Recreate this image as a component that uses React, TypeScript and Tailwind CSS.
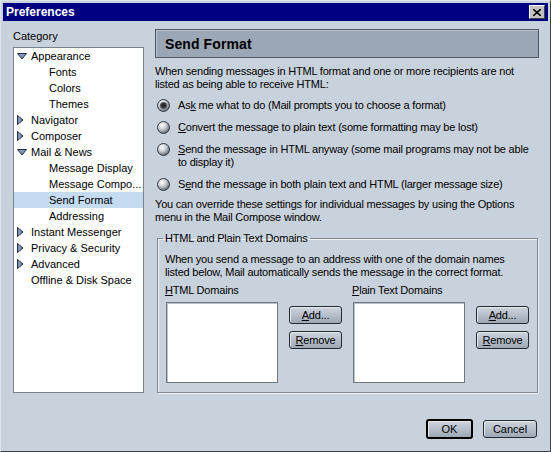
import React from "react";

type Node = {
  label: string;
  level: 0 | 1;
  arrow?: "down" | "right";
  selected?: boolean;
};

const categories: Node[] = [
  { label: "Appearance", level: 0, arrow: "down" },
  { label: "Fonts", level: 1 },
  { label: "Colors", level: 1 },
  { label: "Themes", level: 1 },
  { label: "Navigator", level: 0, arrow: "right" },
  { label: "Composer", level: 0, arrow: "right" },
  { label: "Mail & News", level: 0, arrow: "down" },
  { label: "Message Display", level: 1 },
  { label: "Message Compo...", level: 1 },
  { label: "Send Format", level: 1, selected: true },
  { label: "Addressing", level: 1 },
  { label: "Instant Messenger", level: 0, arrow: "right" },
  { label: "Privacy & Security", level: 0, arrow: "right" },
  { label: "Advanced", level: 0, arrow: "right" },
  { label: "Offline & Disk Space", level: 0 },
];

const Twisty = ({ dir }: { dir: "down" | "right" }) =>
  dir === "down" ? (
    <svg width="10" height="7" viewBox="0 0 10 7">
      <polygon points="0.5,0.5 9.5,0.5 5,6" fill="#7f97b8" stroke="#243040" strokeWidth="1" />
    </svg>
  ) : (
    <svg width="7" height="10" viewBox="0 0 7 10">
      <polygon points="0.5,0.5 6,5 0.5,9.5" fill="#7f97b8" stroke="#243040" strokeWidth="1" />
    </svg>
  );

const Radio = ({ checked, id }: { checked?: boolean; id: string }) => (
  <svg width="13" height="13" viewBox="0 0 13 13" className="shrink-0">
    <defs>
      <radialGradient id={id} cx="38%" cy="32%" r="70%">
        <stop offset="0" stopColor="#ffffff" />
        <stop offset="0.45" stopColor="#cdd2d8" />
        <stop offset="1" stopColor="#5e666f" />
      </radialGradient>
    </defs>
    <circle cx="6.5" cy="6.5" r="6" fill={`url(#${id})`} stroke="#363c44" strokeWidth="1" />
    {checked && (
      <>
        <circle cx="6.5" cy="6.5" r="3.6" fill="#5a6068" />
        <circle cx="6.5" cy="6.5" r="2.4" fill="#25292e" />
      </>
    )}
  </svg>
);

const Button = ({
  children,
  className = "",
}: {
  children: React.ReactNode;
  className?: string;
}) => (
  <button
    className={`flex items-center justify-center rounded-[3px] border border-[#222a32] bg-gradient-to-b from-[#cdd5de] to-[#9ea9b6] text-[11px] leading-[13px] text-black shadow-[inset_1px_1px_0_#e4e9ee] ${className}`}
  >
    {children}
  </button>
);

const DomainColumn = ({ label, mnemonic }: { label: string; mnemonic: string }) => (
  <div className="flex flex-col">
    <div className="leading-[13px] -ml-[1px]">
      <span className="underline">{mnemonic}</span>
      {label}
    </div>
    <div className="mt-[5px] flex gap-[11px]">
      <div className="w-[112px] h-[81px] bg-white border border-[#6e7883] shadow-[inset_1px_1px_0_#b9c1ca]" />
      <div className="flex flex-col gap-[7px] pt-[4px]">
        <Button className="w-[53px] h-[18px]">
          <span className="underline">A</span>dd...
        </Button>
        <Button className="w-[53px] h-[18px]">
          <span className="underline">R</span>emove
        </Button>
      </div>
    </div>
  </div>
);

export default function App() {
  return (
    <div className="w-[551px] h-[452px] flex flex-col p-[2px] bg-[#c8d2dc] border border-t-[#dde3e9] border-l-[#dde3e9] border-r-[#3b4249] border-b-[#3b4249] font-['Liberation_Sans',Arial,sans-serif] text-[11px] text-black overflow-hidden">
      {/* Title bar */}
      <div className="h-[18px] shrink-0 bg-[#000080] flex items-center justify-between pl-[3px] pr-[3px]">
        <span className="text-white font-bold text-[12px] leading-[14px]">Preferences</span>
        <div className="w-[16px] h-[14px] bg-[#c0c0c0] border border-t-white border-l-white border-r-[#404040] border-b-[#404040] flex items-center justify-center">
          <svg width="8" height="7" viewBox="0 0 8 7">
            <path d="M0 0 L8 7 M8 0 L0 7" stroke="#000" strokeWidth="1.6" />
          </svg>
        </div>
      </div>

      {/* Body */}
      <div className="flex flex-col flex-1 pt-[8px] pl-[10px] pr-[9px]">
        <div className="flex gap-[11px] h-[364px] shrink-0">
          {/* Category tree */}
          <div className="w-[131px] flex flex-col">
            <div className="mt-[1px] leading-[13px]">Category</div>
            <div className="mt-[4px] h-[346px] shrink-0 bg-white border border-[#7a848f]">
              {categories.map((c) => (
                <div
                  key={c.label}
                  className={`h-[16px] flex items-center whitespace-nowrap ${
                    c.level === 0 ? "pl-[3px]" : "pl-[35px]"
                  } ${c.selected ? "bg-[#c4dbf2]" : ""}`}
                >
                  {c.level === 0 && (
                    <span className="w-[14px] flex items-center">
                      {c.arrow && <Twisty dir={c.arrow} />}
                    </span>
                  )}
                  <span className="leading-[13px]">{c.label}</span>
                </div>
              ))}
            </div>
          </div>

          {/* Panel */}
          <div className="flex-1 flex flex-col tracking-[-0.2px] whitespace-nowrap">
            <div className="h-[29px] shrink-0 bg-[#9ba7b4] border border-[#4f5965] shadow-[inset_1px_1px_0_#b7c0ca] flex items-center pl-[9px]">
              <span className="font-bold text-[14px] leading-[16px] tracking-[0.1px]">Send Format</span>
            </div>

            <p className="mt-[7px] leading-[13px] shrink-0">
              When sending messages in HTML format and one or more recipients are not
              <br />
              listed as being able to receive HTML:
            </p>

            <div className="mt-[8px] flex flex-col gap-[9px] pl-[2px] shrink-0">
              <div className="flex items-start gap-[8px]">
                <Radio id="r1" checked />
                <span className="leading-[13px]">
                  As<span className="underline">k</span> me what to do (Mail prompts you to choose a format)
                </span>
              </div>
              <div className="flex items-start gap-[8px]">
                <Radio id="r2" />
                <span className="leading-[13px]">
                  <span className="underline">C</span>onvert the message to plain text (some formatting may be lost)
                </span>
              </div>
              <div className="flex items-start gap-[8px]">
                <Radio id="r3" />
                <span className="leading-[13px]">
                  <span className="underline">S</span>end the message in HTML anyway (some mail programs may not be able
                  <br />
                  to display it)
                </span>
              </div>
              <div className="flex items-start gap-[8px]">
                <Radio id="r4" />
                <span className="leading-[13px]">
                  S<span className="underline">e</span>nd the message in both plain text and HTML (larger message size)
                </span>
              </div>
            </div>

            <p className="mt-[7px] leading-[13px] shrink-0">
              You can override these settings for individual messages by using the Options
              <br />
              menu in the Mail Compose window.
            </p>

            <fieldset className="mt-[8px] ml-[2px] mr-[1px] flex-1 border border-[#7d8792] shadow-[inset_1px_1px_0_#eef2f5,1px_1px_0_#eef2f5] pl-[7px] pr-[7px] pb-[9px]">
              <legend className="px-[2px] -ml-[2px] leading-[13px]">HTML and Plain Text Domains</legend>
              <p className="mt-[8px] leading-[13px]">
                When you send a message to an address with one of the domain names
                <br />
                listed below, Mail automatically sends the message in the correct format.
              </p>
              <div className="mt-[5px] flex gap-[11px] pl-[1px]">
                <DomainColumn mnemonic="H" label="TML Domains" />
                <DomainColumn mnemonic="P" label="lain Text Domains" />
              </div>
            </fieldset>
          </div>
        </div>

        {/* Footer */}
        <div className="mt-[26px] flex items-center justify-end gap-[10px] pr-[2px]">
          <Button className="w-[47px] h-[20px] !border-2 !border-black">OK</Button>
          <Button className="w-[54px] h-[18px]">Cancel</Button>
        </div>
      </div>
    </div>
  );
}
